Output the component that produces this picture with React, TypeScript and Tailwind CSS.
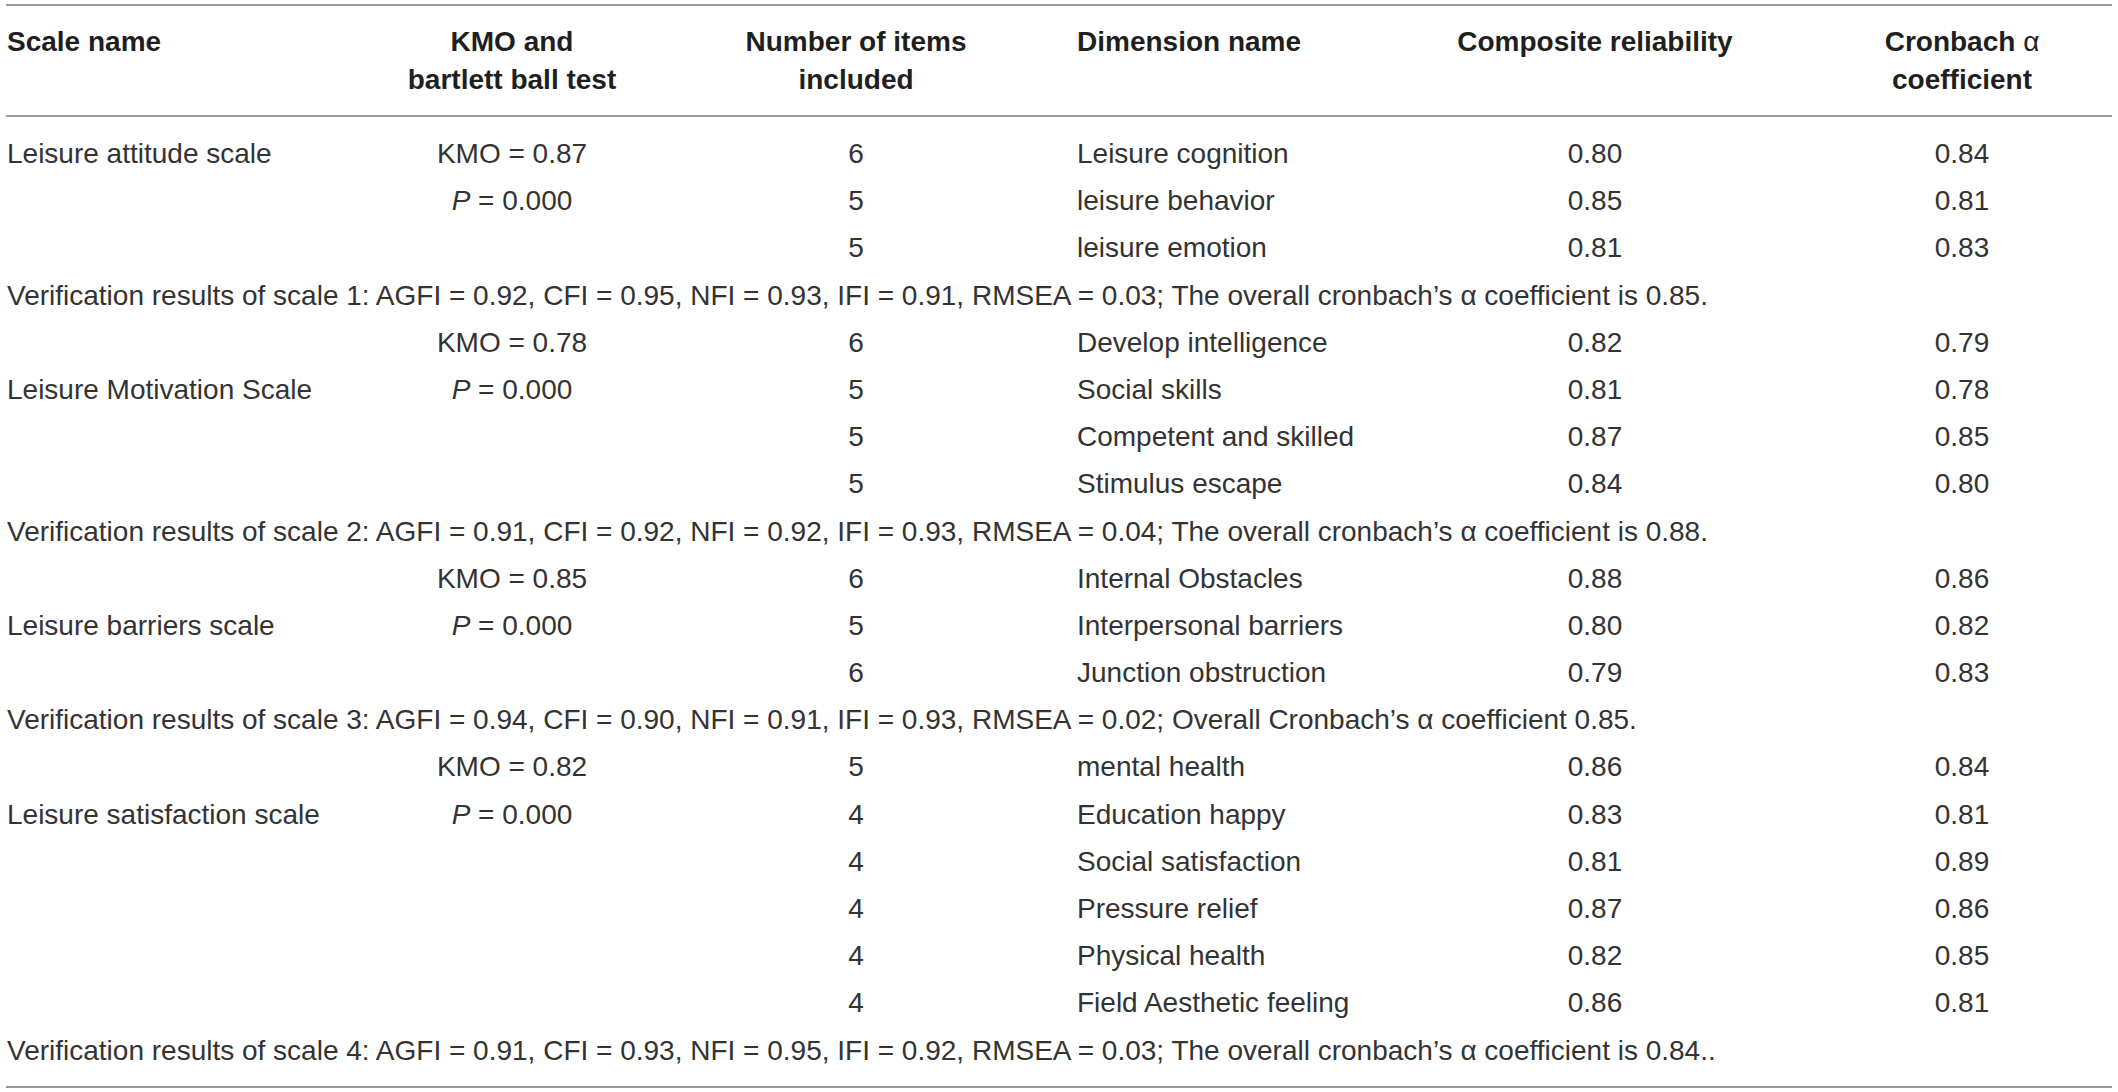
import React from "react";

type Row = { s?: string; k?: React.ReactNode; n: string; d: string; c: string; a: string };

const P = (
  <span>
    <span className="italic">P</span> = 0.000
  </span>
);

const blocks: { rows: Row[]; v: string }[] = [
  {
    rows: [
      { s: "Leisure attitude scale", k: "KMO = 0.87", n: "6", d: "Leisure cognition", c: "0.80", a: "0.84" },
      { k: P, n: "5", d: "leisure behavior", c: "0.85", a: "0.81" },
      { n: "5", d: "leisure emotion", c: "0.81", a: "0.83" },
    ],
    v: "Verification results of scale 1: AGFI = 0.92, CFI = 0.95, NFI = 0.93, IFI = 0.91, RMSEA = 0.03; The overall cronbach\u2019s \u03b1 coefficient is 0.85.",
  },
  {
    rows: [
      { k: "KMO = 0.78", n: "6", d: "Develop intelligence", c: "0.82", a: "0.79" },
      { s: "Leisure Motivation Scale", k: P, n: "5", d: "Social skills", c: "0.81", a: "0.78" },
      { n: "5", d: "Competent and skilled", c: "0.87", a: "0.85" },
      { n: "5", d: "Stimulus escape", c: "0.84", a: "0.80" },
    ],
    v: "Verification results of scale 2: AGFI = 0.91, CFI = 0.92, NFI = 0.92, IFI = 0.93, RMSEA = 0.04; The overall cronbach\u2019s \u03b1 coefficient is 0.88.",
  },
  {
    rows: [
      { k: "KMO = 0.85", n: "6", d: "Internal Obstacles", c: "0.88", a: "0.86" },
      { s: "Leisure barriers scale", k: P, n: "5", d: "Interpersonal barriers", c: "0.80", a: "0.82" },
      { n: "6", d: "Junction obstruction", c: "0.79", a: "0.83" },
    ],
    v: "Verification results of scale 3: AGFI = 0.94, CFI = 0.90, NFI = 0.91, IFI = 0.93, RMSEA = 0.02; Overall Cronbach\u2019s \u03b1 coefficient 0.85.",
  },
  {
    rows: [
      { k: "KMO = 0.82", n: "5", d: "mental health", c: "0.86", a: "0.84" },
      { s: "Leisure satisfaction scale", k: P, n: "4", d: "Education happy", c: "0.83", a: "0.81" },
      { n: "4", d: "Social satisfaction", c: "0.81", a: "0.89" },
      { n: "4", d: "Pressure relief", c: "0.87", a: "0.86" },
      { n: "4", d: "Physical health", c: "0.82", a: "0.85" },
      { n: "4", d: "Field Aesthetic feeling", c: "0.86", a: "0.81" },
    ],
    v: "Verification results of scale 4: AGFI = 0.91, CFI = 0.93, NFI = 0.95, IFI = 0.92, RMSEA = 0.03; The overall cronbach\u2019s \u03b1 coefficient is 0.84..",
  },
];

const grid = "grid grid-cols-[364px_284px_404px_320px_434px_300px]";

export default function App() {
  return (
    <div
      className="bg-white w-[2118px] h-[1092px] overflow-hidden text-[28px] text-[#333333]"
      style={{ fontFamily: '"Liberation Sans", Arial, sans-serif' }}
    >
      <div className="ml-[6px] mt-[4px] w-[2106px] border-t-2 border-b-2 border-[#9a9a9a]">
        <div className={`${grid} pt-[17px] pb-[16px] leading-[38px] font-bold text-[#1f1f1f] border-b-2 border-[#9a9a9a]`}>
          <div className="pl-[1px]">Scale name</div>
          <div className="text-center">
            KMO and
            <br />
            bartlett ball test
          </div>
          <div className="text-center">
            Number of items
            <br />
            included
          </div>
          <div className="pl-[19px]">Dimension name</div>
          <div className="text-center">Composite reliability</div>
          <div className="text-center">
            Cronbach <span className="font-normal">&alpha;</span>
            <br />
            coefficient
          </div>
        </div>
        <div className="pt-[13px] pb-[12px]">
          {blocks.map((b, bi) => (
            <React.Fragment key={bi}>
              {b.rows.map((r, ri) => (
                <div key={ri} className={`${grid} h-[47.2px] leading-[47.2px] whitespace-nowrap`}>
                  <div className="pl-[1px]">{r.s ?? ""}</div>
                  <div className="text-center">{r.k ?? ""}</div>
                  <div className="text-center">{r.n}</div>
                  <div className="pl-[19px]">{r.d}</div>
                  <div className="text-center">{r.c}</div>
                  <div className="text-center">{r.a}</div>
                </div>
              ))}
              <div className="h-[47.2px] leading-[47.2px] pl-[1px] whitespace-nowrap">{b.v}</div>
            </React.Fragment>
          ))}
        </div>
      </div>
    </div>
  );
}
